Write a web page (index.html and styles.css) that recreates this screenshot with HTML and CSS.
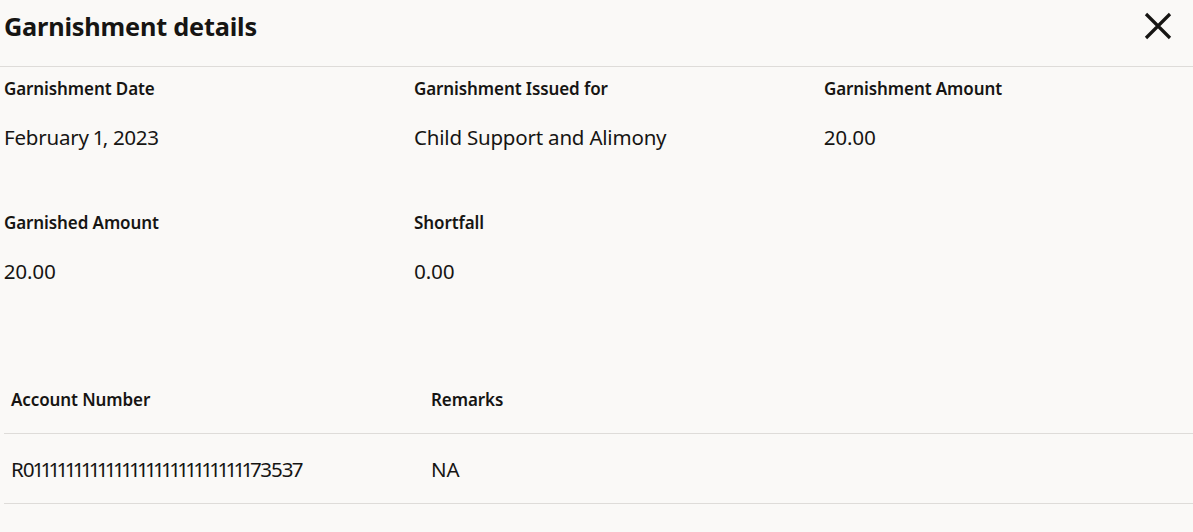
FILE: index.html
```html
<!DOCTYPE html>
<html>
<head>
<meta charset="utf-8">
<link rel="stylesheet" href="styles.css">
</head>
<body>
<div class="dialog">
  <header class="head">
    <h1 class="title">Garnishment details</h1>
    <button class="close" aria-label="Close">
      <svg width="30" height="30" viewBox="0 0 30 30"><path d="M3 3 L27 27 M27 3 L3 27" stroke="#161513" stroke-width="3.2" fill="none"/></svg>
    </button>
  </header>
  <div class="body">
    <div class="grid">
      <div class="field"><div class="label">Garnishment Date</div><div class="value">February 1, 2023</div></div>
      <div class="field"><div class="label">Garnishment Issued for</div><div class="value">Child Support and Alimony</div></div>
      <div class="field"><div class="label">Garnishment Amount</div><div class="value">20.00</div></div>
      <div class="field"><div class="label">Garnished Amount</div><div class="value">20.00</div></div>
      <div class="field"><div class="label">Shortfall</div><div class="value">0.00</div></div>
    </div>
    <table class="tbl">
      <thead><tr><th class="c1">Account Number</th><th>Remarks</th></tr></thead>
      <tbody><tr><td class="c1 acct">R011111111111111111111111111173537</td><td>NA</td></tr></tbody>
    </table>
  </div>
</div>
</body>
</html>
```
FILE: styles.css
```css
html, body { margin: 0; padding: 0; background: #faf9f7; }
body { font-family: "Noto Sans", "Open Sans", sans-serif; color: #161513; font-variant-numeric: proportional-nums; }
.head { display: flex; align-items: flex-start; justify-content: space-between; height: 67px; border-bottom: 1px solid #dedcd9; padding: 9px 20px 0 4px; box-sizing: border-box; }
.title { margin: 0; font-size: 25.3px; line-height: 34px; font-weight: 700; letter-spacing: -0.2px; }
.close { background: none; border: 0; padding: 0; margin-top: 2px; width: 30px; height: 30px; display: flex; }
.body { padding: 0 0 0 4px; }
.grid { display: grid; grid-template-columns: 410px 410px 410px; }
.field { height: 134px; padding-top: 9px; box-sizing: border-box; }
.label { font-size: 17px; font-weight: 600; line-height: 26px; letter-spacing: -0.1px; }
.value { margin-top: 21px; font-size: 20.5px; line-height: 28px; letter-spacing: -0.2px; }
.tbl { width: 100%; border-collapse: collapse; margin-top: 31px; }
.tbl th, .tbl td { text-align: left; padding: 0 0 0 7px; border-bottom: 1px solid #dedcd9; }
.tbl th { font-size: 17px; font-weight: 600; height: 67px; vertical-align: middle; letter-spacing: -0.1px; }
.tbl td { font-size: 20.5px; height: 69px; letter-spacing: -0.2px; }
.tbl .c1 { width: 413px; }
.tbl .acct { letter-spacing: -1px; }
```
